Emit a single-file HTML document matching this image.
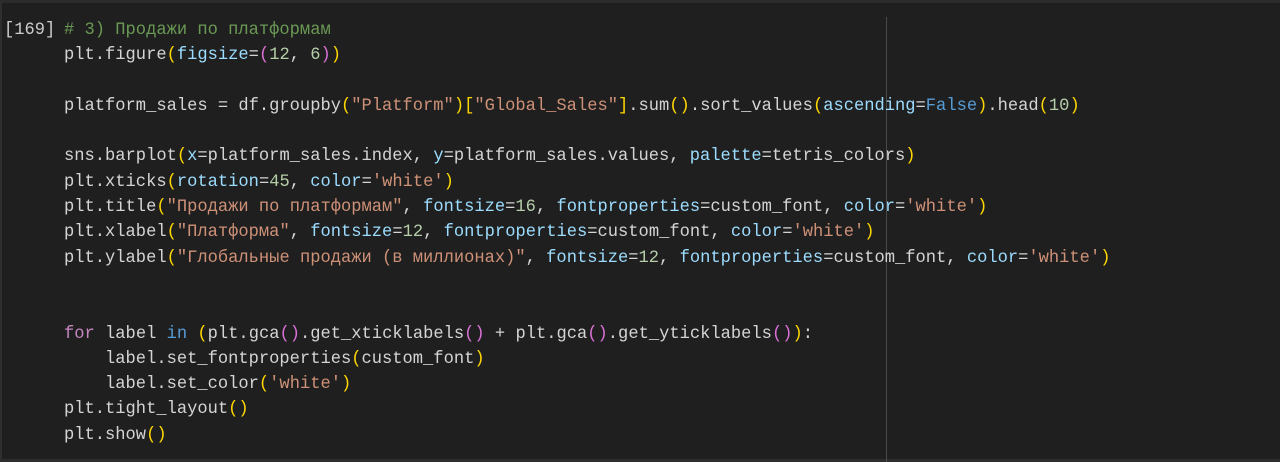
<!DOCTYPE html>
<html><head><meta charset="utf-8"><style>
html,body{margin:0;padding:0;background:#1f1f1f;width:1280px;height:462px;overflow:hidden;}
.top{position:absolute;left:0;top:0;width:1280px;height:3px;background:#2b2b2b;}
.lb{position:absolute;left:0;top:0;width:2px;height:462px;background:#2e2e2e;}
.bb{position:absolute;left:0;top:459px;width:1280px;height:3px;background:#2e2e2e;}
.vl{position:absolute;left:886px;top:17px;width:1px;height:445px;background:#4a4a4a;}
pre{position:absolute;left:64px;top:18px;margin:0;font-family:"Liberation Mono","DejaVu Sans Mono",monospace;font-size:17.1px;line-height:25.3px;color:#d4d4d4;}
.n{position:absolute;left:4px;top:18px;font-family:"Liberation Mono",monospace;font-size:17.1px;line-height:25.3px;color:#cccccc;}
.c{color:#6a9955}.s{color:#ce9178}.d{color:#b5cea8}.y{color:#ffd700}.p{color:#da70d6}.b{color:#569cd6}.k{color:#c586c0}.a{color:#9cdcfe}
</style></head><body>
<div class="top"></div><div class="lb"></div><div class="bb"></div><div class="vl"></div>
<div class="n">[169]</div>
<pre><span class="c"># 3) Продажи по платформам</span>
plt.figure<span class="y">(</span><span class="a">figsize</span>=<span class="p">(</span><span class="d">12</span>, <span class="d">6</span><span class="p">)</span><span class="y">)</span>

platform_sales = df.groupby<span class="y">(</span><span class="s">"Platform"</span><span class="y">)</span><span class="y">[</span><span class="s">"Global_Sales"</span><span class="y">]</span>.sum<span class="y">()</span>.sort_values<span class="y">(</span><span class="a">ascending</span>=<span class="b">False</span><span class="y">)</span>.head<span class="y">(</span><span class="d">10</span><span class="y">)</span>

sns.barplot<span class="y">(</span><span class="a">x</span>=platform_sales.index, <span class="a">y</span>=platform_sales.values, <span class="a">palette</span>=tetris_colors<span class="y">)</span>
plt.xticks<span class="y">(</span><span class="a">rotation</span>=<span class="d">45</span>, <span class="a">color</span>=<span class="s">'white'</span><span class="y">)</span>
plt.title<span class="y">(</span><span class="s">"Продажи по платформам"</span>, <span class="a">fontsize</span>=<span class="d">16</span>, <span class="a">fontproperties</span>=custom_font, <span class="a">color</span>=<span class="s">'white'</span><span class="y">)</span>
plt.xlabel<span class="y">(</span><span class="s">"Платформа"</span>, <span class="a">fontsize</span>=<span class="d">12</span>, <span class="a">fontproperties</span>=custom_font, <span class="a">color</span>=<span class="s">'white'</span><span class="y">)</span>
plt.ylabel<span class="y">(</span><span class="s">"Глобальные продажи (в миллионах)"</span>, <span class="a">fontsize</span>=<span class="d">12</span>, <span class="a">fontproperties</span>=custom_font, <span class="a">color</span>=<span class="s">'white'</span><span class="y">)</span>


<span class="k">for</span> label <span class="b">in</span> <span class="y">(</span>plt.gca<span class="p">()</span>.get_xticklabels<span class="p">()</span> + plt.gca<span class="p">()</span>.get_yticklabels<span class="p">()</span><span class="y">)</span>:
    label.set_fontproperties<span class="y">(</span>custom_font<span class="y">)</span>
    label.set_color<span class="y">(</span><span class="s">'white'</span><span class="y">)</span>
plt.tight_layout<span class="y">()</span>
plt.show<span class="y">()</span></pre>
</body></html>
